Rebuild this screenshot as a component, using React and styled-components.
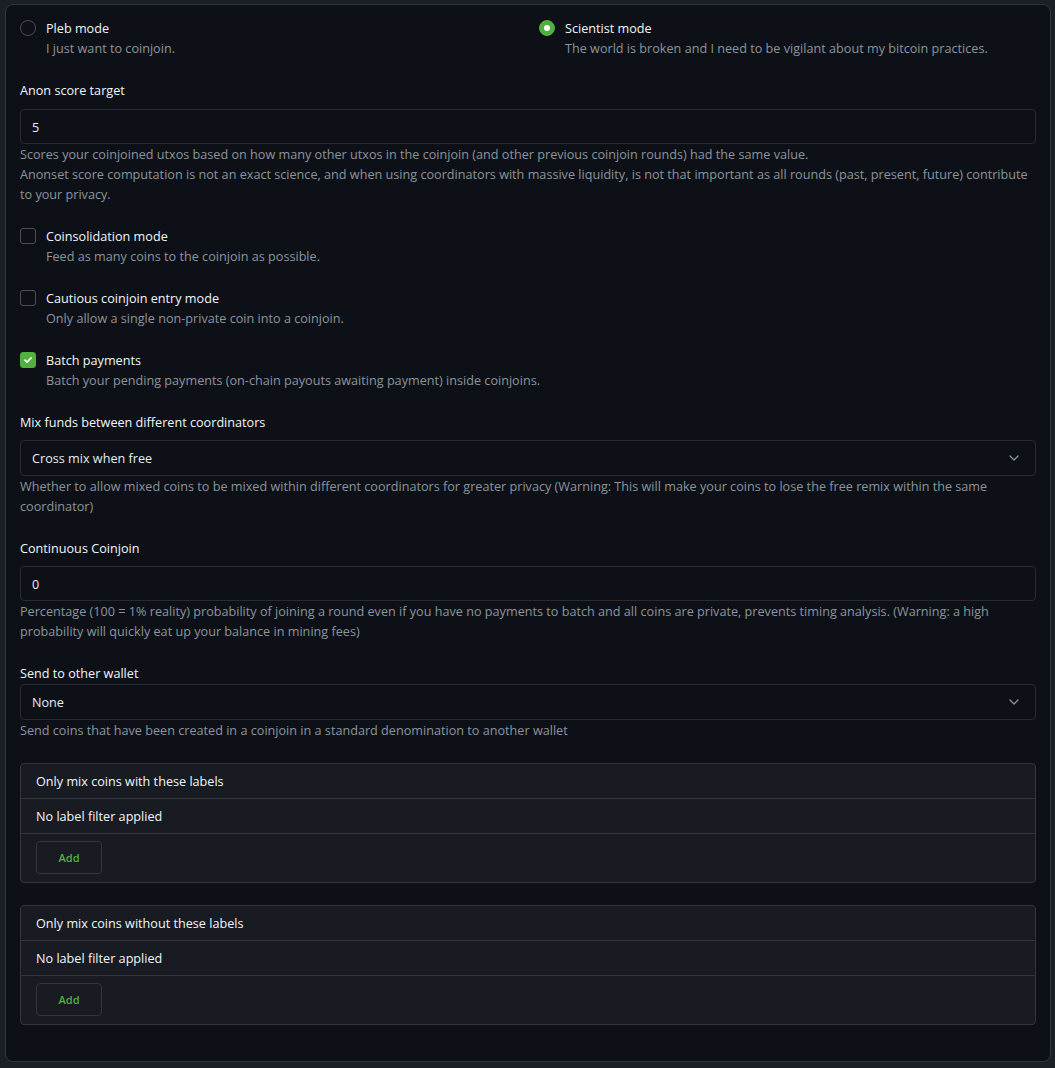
import styled, { createGlobalStyle } from 'styled-components';

const GlobalStyle = createGlobalStyle`
  html, body {
    margin: 0;
    background: #1b1f26;
  }
  body {
    font-family: "Open Sans", "Liberation Sans", sans-serif;
    font-size: 12.65px;
    line-height: 20px;
    color: #f0f6fc;
  }
  * { box-sizing: border-box; }
`;

const Page = styled.div`
  padding: 4px 4px 6px 5px;
`;

const Panel = styled.div`
  background: #0d1117;
  border: 1px solid #30363d;
  border-radius: 8px;
  padding: 13px 14px 36px;
  display: flex;
  flex-direction: column;
`;

const ModeGrid = styled.div`
  display: grid;
  grid-template-columns: 1fr 1fr;
  column-gap: 22px;
`;

const Option = styled.label`
  display: flex;
  align-items: flex-start;
  gap: 10px;
  margin-top: ${({ $first }) => ($first ? '0' : '22px')};
`;

const Radio = styled.span`
  flex: none;
  width: 16px;
  height: 16px;
  margin-top: 2px;
  border-radius: 50%;
  border: 1px solid ${({ $on }) => ($on ? '#51b13e' : '#484f58')};
  background: ${({ $on }) => ($on ? '#51b13e' : 'transparent')};
  display: flex;
  align-items: center;
  justify-content: center;
  &::after {
    content: '';
    display: ${({ $on }) => ($on ? 'block' : 'none')};
    width: 6px;
    height: 6px;
    border-radius: 50%;
    background: #fff;
  }
`;

const Check = styled.span`
  flex: none;
  width: 16px;
  height: 16px;
  margin-top: 2px;
  border-radius: 3px;
  border: 1px solid ${({ $on }) => ($on ? '#51b13e' : '#484f58')};
  background: ${({ $on }) => ($on ? '#51b13e' : 'transparent')};
  display: flex;
  align-items: center;
  justify-content: center;
`;

const OptionText = styled.div`
  display: flex;
  flex-direction: column;
`;

const OptionTitle = styled.span`
  color: #f0f6fc;
  font-weight: 500;
`;

const Muted = styled.span`
  color: #8b949e;
`;

const Field = styled.div`
  margin-top: 22px;
  display: flex;
  flex-direction: column;
`;

const Label = styled.div`
  font-weight: 500;
  color: #f0f6fc;
  margin-bottom: ${({ $mb = 8 }) => $mb}px;
`;

const Input = styled.div`
  height: ${({ $select }) => ($select ? 36 : 35)}px;
  border: 1px solid #272c34;
  border-radius: 4px;
  background: #0d1117;
  padding: 0 15px 0 11px;
  display: flex;
  align-items: center;
  justify-content: space-between;
  color: #e6edf3;
`;

const Help = styled.div`
  color: #8b949e;
`;

const Card = styled.div`
  margin-top: ${({ $gap }) => $gap}px;
  border: 1px solid #30363d;
  border-radius: 4px;
  background: #181b22;
`;

const CardRow = styled.div`
  padding: ${({ $last }) => ($last ? '7px 15px 8px' : '7px 15px')};
  border-bottom: ${({ $last }) => ($last ? 'none' : '1px solid #30363d')};
  font-weight: ${({ $bold }) => ($bold ? 500 : 400)};
  color: #f0f6fc;
`;

const AddButton = styled.button`
  display: block;
  width: 66px;
  height: 33px;
  background: transparent;
  border: 1px solid #30363d;
  border-radius: 4px;
  color: #51b13e;
  font-family: inherit;
  font-size: 11px;
  font-weight: 600;
`;

const Chevron = () => (
  <svg width="12" height="12" viewBox="0 0 12 12" fill="none">
    <path d="M2 4l4 4 4-4" stroke="#8b949e" strokeWidth="1.3" strokeLinecap="round" strokeLinejoin="round" />
  </svg>
);

const Tick = () => (
  <svg width="10" height="10" viewBox="0 0 10 10" fill="none">
    <path d="M2 5.2l2 2L8 3" stroke="#fff" strokeWidth="1.8" strokeLinecap="round" strokeLinejoin="round" />
  </svg>
);

const toggles = [
  { title: 'Coinsolidation mode', desc: 'Feed as many coins to the coinjoin as possible.', on: false },
  { title: 'Cautious coinjoin entry mode', desc: 'Only allow a single non-private coin into a coinjoin.', on: false },
  { title: 'Batch payments', desc: 'Batch your pending payments (on-chain payouts awaiting payment) inside coinjoins.', on: true },
];

const LabelFilter = ({ title, gap }) => (
  <Card $gap={gap}>
    <CardRow $bold>{title}</CardRow>
    <CardRow>No label filter applied</CardRow>
    <CardRow $last>
      <AddButton>Add</AddButton>
    </CardRow>
  </Card>
);

export default function App() {
  return (
    <Page>
      <GlobalStyle />
      <Panel>
        <ModeGrid>
          <Option $first>
            <Radio />
            <OptionText>
              <OptionTitle>Pleb mode</OptionTitle>
              <Muted>I just want to coinjoin.</Muted>
            </OptionText>
          </Option>
          <Option $first>
            <Radio $on />
            <OptionText>
              <OptionTitle>Scientist mode</OptionTitle>
              <Muted>The world is broken and I need to be vigilant about my bitcoin practices.</Muted>
            </OptionText>
          </Option>
        </ModeGrid>

        <Field>
          <Label $mb={9}>Anon score target</Label>
          <Input>5</Input>
          <Help>
            Scores your coinjoined utxos based on how many other utxos in the coinjoin (and other previous coinjoin rounds) had the same value.
            <br />
            Anonset score computation is not an exact science, and when using coordinators with massive liquidity, is not that important as all rounds (past, present, future) contribute to your privacy.
          </Help>
        </Field>

        {toggles.map((t) => (
          <Option key={t.title}>
            <Check $on={t.on}>{t.on && <Tick />}</Check>
            <OptionText>
              <OptionTitle>{t.title}</OptionTitle>
              <Muted>{t.desc}</Muted>
            </OptionText>
          </Option>
        ))}

        <Field>
          <Label>Mix funds between different coordinators</Label>
          <Input $select>
            Cross mix when free
            <Chevron />
          </Input>
          <Help>
            Whether to allow mixed coins to be mixed within different coordinators for greater privacy (Warning: This will make your coins to lose the free remix within the same coordinator)
          </Help>
        </Field>

        <Field>
          <Label>Continuous Coinjoin</Label>
          <Input>0</Input>
          <Help>
            Percentage (100 = 1% reality) probability of joining a round even if you have no payments to batch and all coins are private, prevents timing analysis. (Warning: a high probability will quickly eat up your balance in mining fees)
          </Help>
        </Field>

        <Field>
          <Label $mb={1}>Send to other wallet</Label>
          <Input $select>
            None
            <Chevron />
          </Input>
          <Help>Send coins that have been created in a coinjoin in a standard denomination to another wallet</Help>
        </Field>

        <LabelFilter title="Only mix coins with these labels" gap={23} />
        <LabelFilter title="Only mix coins without these labels" gap={22} />
      </Panel>
    </Page>
  );
}
